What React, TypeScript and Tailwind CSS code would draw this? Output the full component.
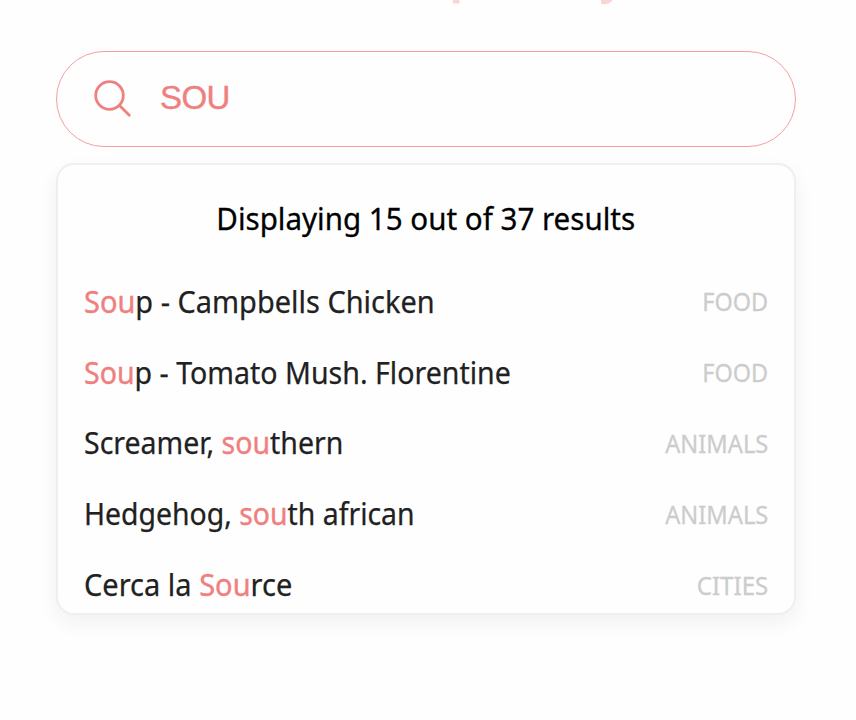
type Part = { t: string; hit?: boolean };
type Row = { parts: Part[]; tag: string; fit: string; tagFit: string };

const rows: Row[] = [
  { parts: [{ t: 'Sou', hit: true }, { t: 'p - Campbells Chicken' }], tag: 'FOOD', fit: 'scale-x-[0.934]', tagFit: 'scale-x-[0.9]' },
  { parts: [{ t: 'Sou', hit: true }, { t: 'p - Tomato Mush. Florentine' }], tag: 'FOOD', fit: 'scale-x-[0.921]', tagFit: 'scale-x-[0.9]' },
  { parts: [{ t: 'Screamer, ' }, { t: 'sou', hit: true }, { t: 'thern' }], tag: 'ANIMALS', fit: 'scale-x-[0.919]', tagFit: 'scale-x-[0.91]' },
  { parts: [{ t: 'Hedgehog, ' }, { t: 'sou', hit: true }, { t: 'th african' }], tag: 'ANIMALS', fit: 'scale-x-[0.916]', tagFit: 'scale-x-[0.91]' },
  { parts: [{ t: 'Cerca la ' }, { t: 'Sou', hit: true }, { t: 'rce' }], tag: 'CITIES', fit: 'scale-x-[0.936]', tagFit: 'scale-x-[0.926]' },
];

export default function App() {
  return (
    <main className="h-[720px] w-[856px] overflow-hidden bg-[#fefefe] font-['Noto_Sans',sans-serif]">
      <div className="h-[51px]">
        <svg width="856" height="6" className="block" fill="#fbd5d5">
          <path d="M453 0h6.500v3.500h-6.500z" />
          <path d="M601 0h11.500c-2 3-4.500 4.200-8 4.200-1.400 0-2.500-.2-3.500-.5z" />
        </svg>
      </div>
      <div className="ml-14 flex h-24 w-[740px] items-center rounded-full border border-[#f3a09f] pl-[37px]">
        <svg width="38" height="38" viewBox="0 0 38 38" fill="none" stroke="#f08080" strokeWidth="2.800" strokeLinecap="round">
          <circle cx="15.500" cy="15.500" r="13.800" />
          <path d="M25.500 25.500L35.300 35.300" />
        </svg>
        <span className="mb-[3px] ml-[28px] font-['Liberation_Sans',sans-serif] text-[33px] leading-none tracking-[-0.6px] text-[#f08080] [-webkit-text-stroke:0.4px_#f08080]">SOU</span>
      </div>
      <section className="ml-14 mt-4 h-[452px] w-[740px] overflow-hidden rounded-[18px] border-2 border-[#eeefef] bg-[#fefefe] shadow-[0_8px_20px_rgba(32,33,36,0.06)]">
        <h2 className="mt-[31px] flex h-[44px] items-center justify-center whitespace-nowrap text-[31px] leading-none text-black [-webkit-text-stroke:0.3px_#000000]">
          <span className="inline-block scale-x-[0.953]">Displaying 15 out of 37 results</span>
        </h2>
        <ul className="mt-[26px] px-[26px]">
          {rows.map((r, i) => (
            <li key={i} className="flex h-[70.800px] items-center justify-between whitespace-nowrap leading-none">
              <span className={`inline-block origin-left whitespace-pre text-[31px] text-[#212121] [-webkit-text-stroke:0.25px_currentColor] ${r.fit}`}>
                {r.parts.map((p, j) => (
                  <span key={j} className={p.hit ? 'text-[#f08080] [-webkit-text-stroke:0.4px_#f08080]' : ''}>{p.t}</span>
                ))}
              </span>
              <span className={`inline-block origin-right text-[26px] text-[#cccccc] [-webkit-text-stroke:0.3px_#cccccc] ${r.tagFit}`}>{r.tag}</span>
            </li>
          ))}
        </ul>
      </section>
    </main>
  );
}
